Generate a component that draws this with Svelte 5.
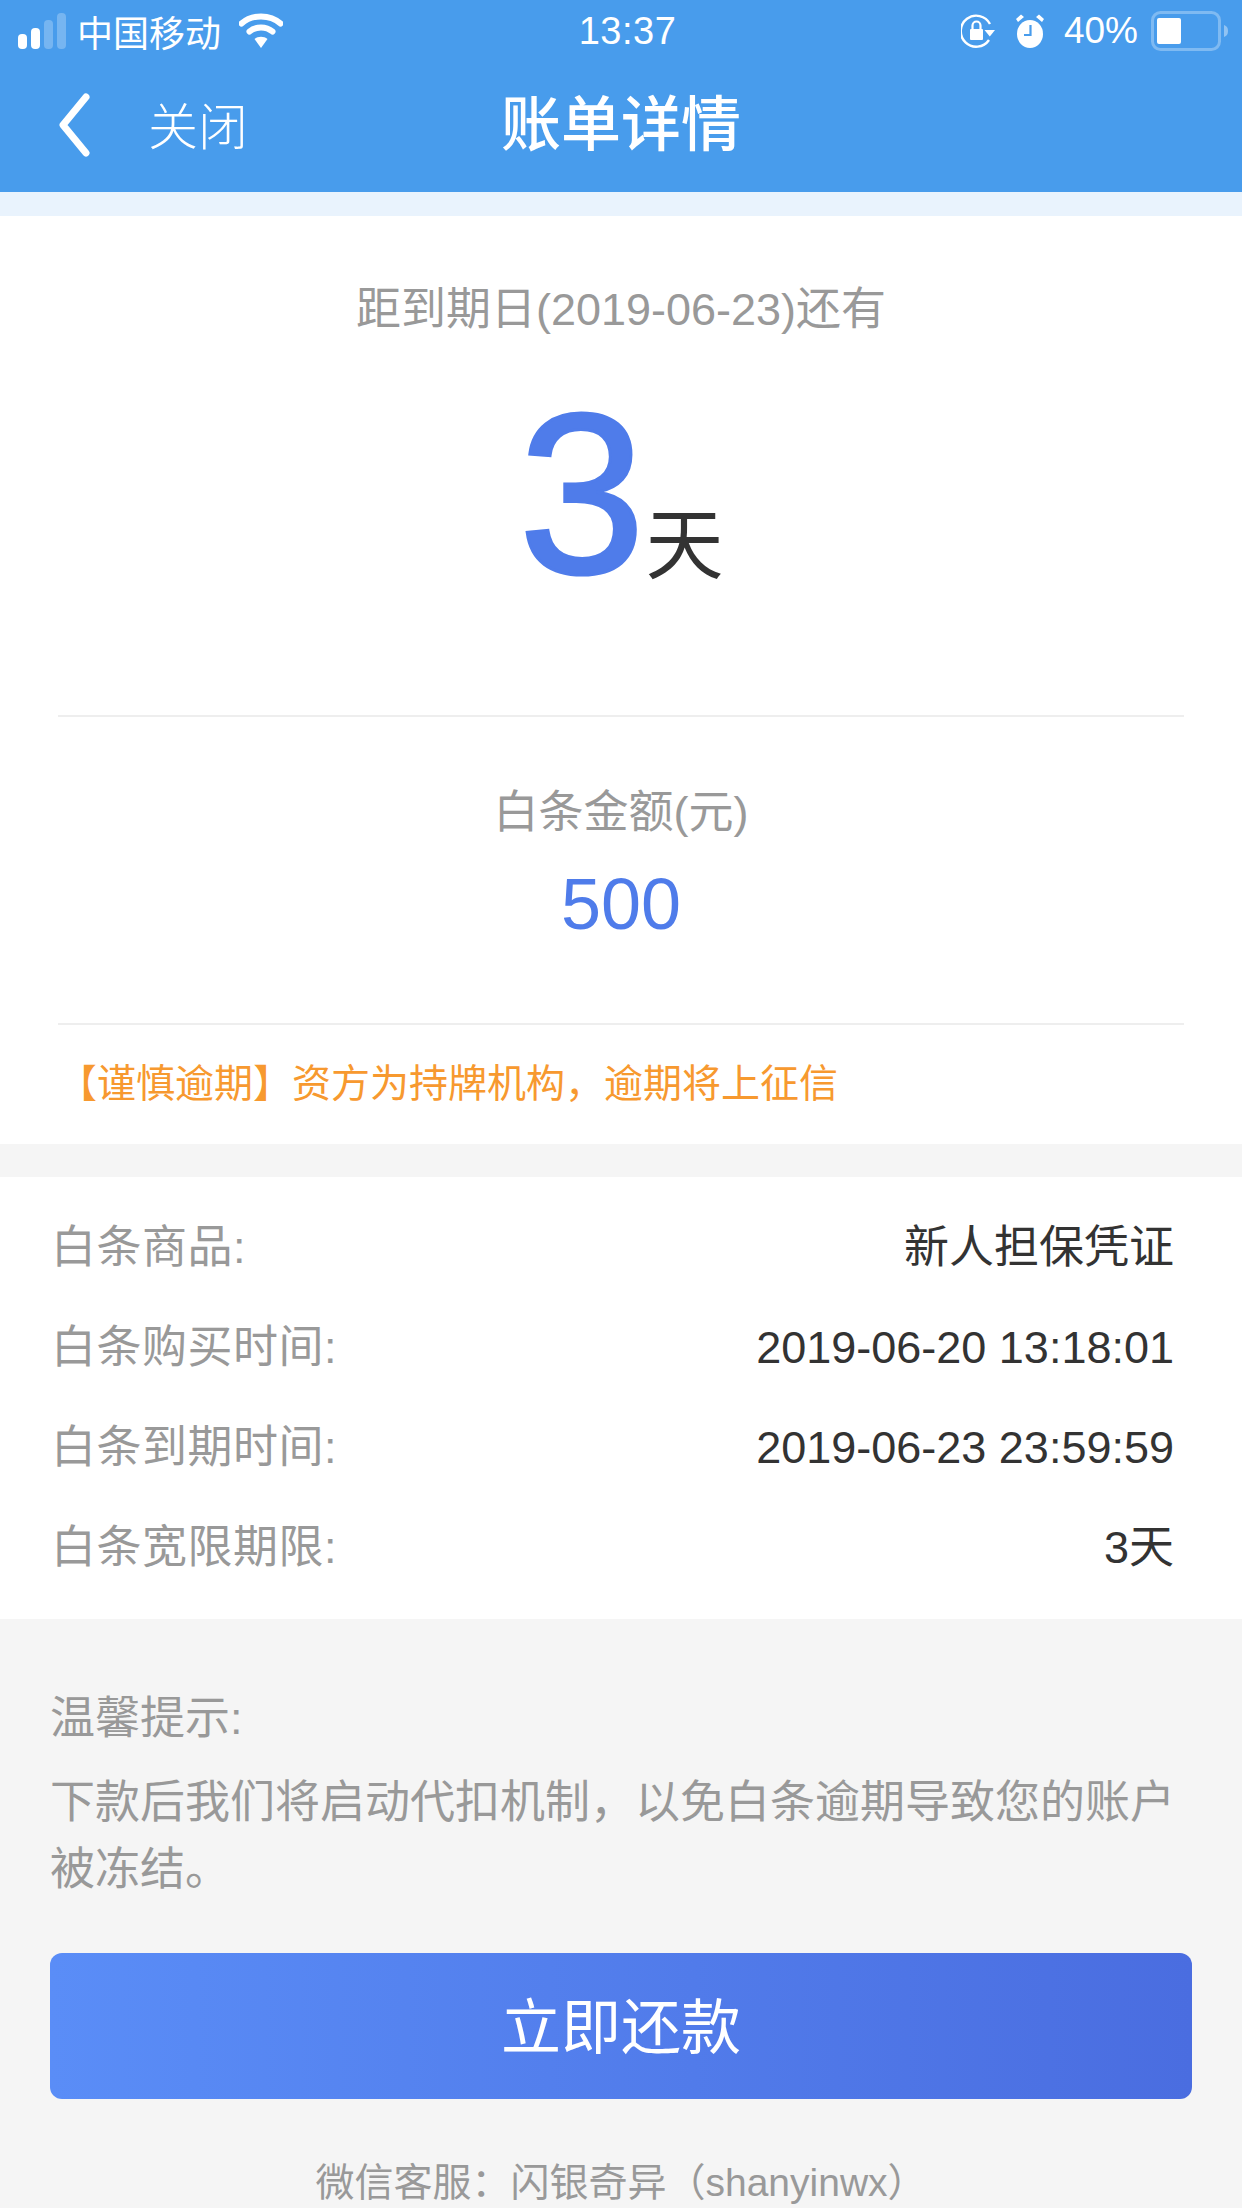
<script>
  const rows = [
    { label: '白条商品:', value: '新人担保凭证' },
    { label: '白条购买时间:', value: '2019-06-20 13:18:01' },
    { label: '白条到期时间:', value: '2019-06-23 23:59:59' },
    { label: '白条宽限期限:', value: '3天' }
  ];
</script>

<div class="page">
  <header class="top">
    <div class="status">
      <div class="status-left">
        <svg class="signal" width="48" height="36" viewBox="0 0 48 36">
          <rect x="0" y="21" width="9" height="15" rx="4" fill="#fff" />
          <rect x="13" y="15" width="9" height="21" rx="4" fill="#fff" />
          <rect x="26" y="7" width="9" height="29" rx="4" fill="#fff" fill-opacity="0.25" />
          <rect x="39" y="0" width="9" height="36" rx="4" fill="#fff" fill-opacity="0.25" />
        </svg>
        <span class="carrier">中国移动</span>
        <svg class="wifi" width="44" height="36" viewBox="0 0 44 36">
          <path d="M2.5 10.5C13 1 31 1 41.5 10.5" fill="none" stroke="#fff" stroke-width="6" stroke-linecap="round" />
          <path d="M10.5 18.5C17 13 27 13 33.5 18.5" fill="none" stroke="#fff" stroke-width="6" stroke-linecap="round" />
          <path d="M15.5 26C19 23 25 23 28.5 26L22 35Z" fill="#fff" />
        </svg>
      </div>
      <span class="time">13:37</span>
      <div class="status-right">
        <svg class="lock" width="34" height="36" viewBox="0 0 34 36">
          <path d="M28 27A15.5 15.5 0 1 1 29 11" fill="none" stroke="#fff" stroke-width="2.4" />
          <path d="M23.5 17H34L28.8 23.5Z" fill="#fff" />
          <rect x="9" y="16" width="13" height="11" rx="1" fill="#fff" />
          <path d="M11.5 16V12.5A4 4 0 0 1 19.5 12.5V16" fill="none" stroke="#fff" stroke-width="2.2" />
        </svg>
        <svg class="alarm" width="30" height="36" viewBox="0 0 30 36">
          <ellipse cx="15" cy="21" rx="13" ry="14" fill="#fff" />
          <path d="M1 6L6 1.5L9 4L3 9Z M29 6L24 1.5L21 4L27 9Z" fill="#fff" />
          <path d="M15.5 12V22H9" fill="none" stroke="#489cec" stroke-width="2.2" />
        </svg>
        <span class="percent">40%</span>
        <svg class="battery" width="78" height="40" viewBox="0 0 78 40">
          <rect x="1.5" y="1.5" width="67" height="37" rx="8" fill="none" stroke="#fff" stroke-opacity="0.3" stroke-width="3" />
          <rect x="6" y="7" width="24" height="26" rx="2" fill="#fff" />
          <path d="M73 14C76 15 77 17 77 20S76 25 73 26Z" fill="#fff" fill-opacity="0.4" />
        </svg>
      </div>
    </div>
    <nav class="nav">
      <div class="nav-left">
        <svg class="back" width="34" height="64" viewBox="0 0 34 64">
          <path d="M29 4L6 32L29 60" fill="none" stroke="#fff" stroke-width="7" stroke-linecap="round" stroke-linejoin="round" />
        </svg>
        <span class="close">关闭</span>
      </div>
      <h1>账单详情</h1>
      <div></div>
    </nav>
  </header>
  <div class="band"></div>

  <section class="summary">
    <p class="due">距到期日(2019-06-23)还有</p>
    <div class="days"><span class="num">3</span><span class="unit">天</span></div>
    <div class="amount">
      <p class="amount-label">白条金额(元)</p>
      <p class="amount-value">500</p>
    </div>
    <p class="warn">【谨慎逾期】资方为持牌机构，逾期将上征信</p>
  </section>

  <section class="details">
    {#each rows as row}
      <div class="row">
        <span class="label">{row.label}</span>
        <span class="value">{row.value}</span>
      </div>
    {/each}
  </section>

  <section class="tips">
    <p class="tips-title">温馨提示:</p>
    <p class="tips-text">下款后我们将启动代扣机制，以免白条逾期导致您的账户被冻结。</p>
  </section>

  <button class="pay" type="button">立即还款</button>
  <p class="service">微信客服：闪银奇异（shanyinwx）</p>
</div>

<style>
  :global(body) {
    margin: 0;
    background: #f5f5f5;
  }

  .page {
    width: 1242px;
    height: 2208px;
    overflow: hidden;
    background: #f5f5f5;
    font-family: "Liberation Sans", "Noto Sans CJK SC", sans-serif;
    font-weight: 400;
  }

  p,
  h1 {
    margin: 0;
  }

  .top {
    height: 192px;
    background: #489cec;
    color: #fff;
  }

  .status {
    height: 62px;
    padding: 0 13px 0 18px;
    box-sizing: border-box;
    display: grid;
    grid-template-columns: 1fr auto 1fr;
    align-items: center;
  }

  .status-left,
  .status-right {
    display: flex;
    align-items: center;
  }

  .status-right {
    justify-content: flex-end;
  }

  .carrier {
    margin-left: 11px;
    font-size: 36px;
  }

  .wifi {
    margin-left: 18px;
  }

  .time {
    margin-left: 8px;
    font-size: 38px;
    letter-spacing: 0.5px;
  }

  .alarm {
    margin-left: 20px;
  }

  .percent {
    margin-left: 19px;
    font-size: 37px;
  }

  .battery {
    margin-left: 13px;
  }

  .nav {
    height: 122px;
    box-sizing: border-box;
    display: grid;
    grid-template-columns: 1fr auto 1fr;
    align-items: center;
  }

  .nav-left {
    display: flex;
    align-items: center;
    padding-left: 57px;
  }

  .back {
    margin-top: 4px;
  }

  .close {
    margin-left: 57px;
    font-size: 50px;
    font-weight: 300;
  }

  h1 {
    padding-bottom: 8px;
    font-size: 60px;
    font-weight: 500;
  }

  .band {
    height: 24px;
    background: #e9f3fd;
  }

  .summary {
    height: 928px;
    background: #fff;
    box-sizing: border-box;
    padding-top: 64px;
    display: flex;
    flex-direction: column;
    align-items: center;
  }

  .due {
    font-size: 45px;
    line-height: 60px;
    color: #999;
  }

  .days {
    height: 377px;
    box-sizing: border-box;
    padding-top: 4px;
    display: flex;
    align-items: baseline;
    justify-content: center;
    width: 1126px;
    border-bottom: 2px solid #eee;
  }

  .num {
    font-size: 228px;
    line-height: 300px;
    color: #4f7cea;
    -webkit-text-stroke: 3px #4f7cea;
  }

  .unit {
    font-size: 78px;
    color: #333;
  }

  .amount {
    width: 1126px;
    height: 308px;
    box-sizing: border-box;
    padding-top: 66px;
    text-align: center;
    border-bottom: 2px solid #eee;
  }

  .amount-label {
    font-size: 45px;
    line-height: 60px;
    color: #999;
  }

  .amount-value {
    margin-top: 16px;
    font-size: 72px;
    line-height: 90px;
    color: #4f7cea;
  }

  .warn {
    width: 1126px;
    margin-top: 34px;
    box-sizing: border-box;
    font-size: 39px;
    line-height: 50px;
    color: #f7992f;
  }

  .details {
    margin-top: 33px;
    height: 442px;
    padding: 21px 68px 0 51px;
    box-sizing: border-box;
    background: #fff;
  }

  .row {
    height: 100px;
    display: flex;
    align-items: center;
    justify-content: space-between;
    font-size: 45px;
    line-height: 60px;
  }

  .label {
    letter-spacing: 0.5px;
    color: #999;
  }

  .value {
    color: #333;
  }

  .tips {
    padding: 69px 50px 0;
    color: #999;
    font-size: 45px;
  }

  .tips-title {
    line-height: 62px;
  }

  .tips-text {
    margin-top: 19px;
    line-height: 67px;
  }

  .pay {
    display: block;
    width: 1142px;
    height: 146px;
    margin: 50px 0 0 50px;
    padding: 0 0 8px;
    border: 0;
    border-radius: 12px;
    background: linear-gradient(90deg, #5a8df7, #4a6de0);
    color: #fff;
    font: inherit;
    font-size: 60px;
  }

  .service {
    margin-top: 59px;
    text-align: center;
    font-size: 39px;
    line-height: 50px;
    color: #999;
  }
</style>
